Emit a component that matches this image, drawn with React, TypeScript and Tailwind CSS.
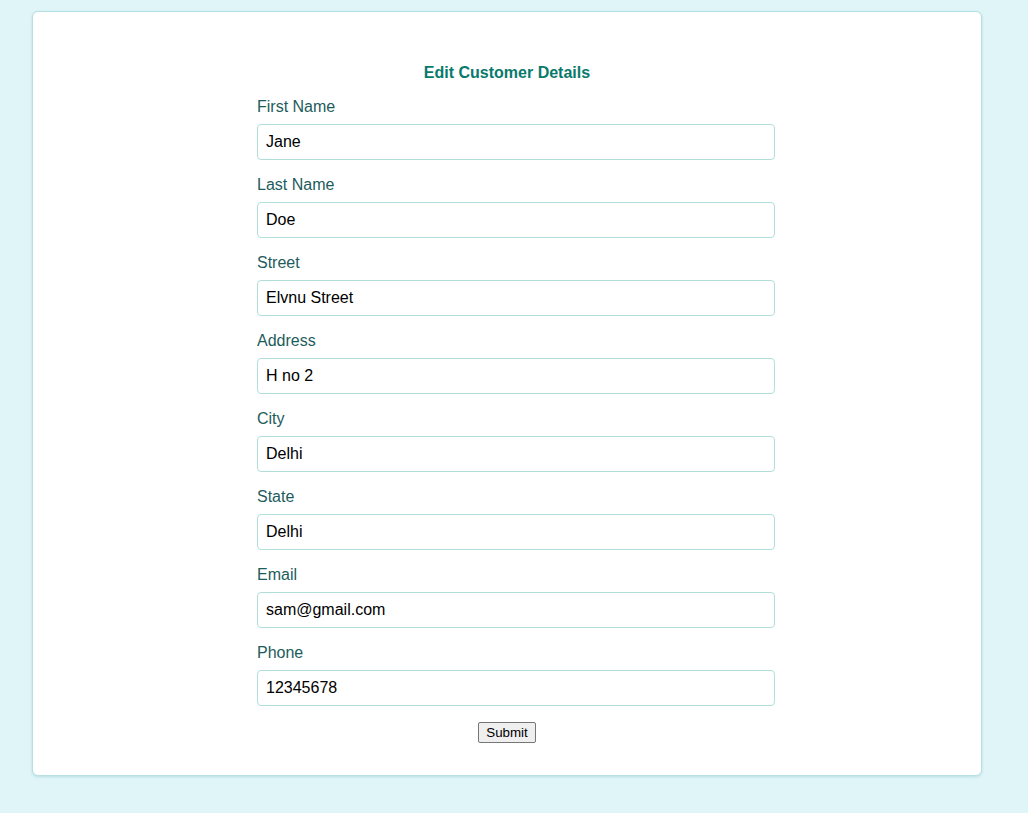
import { useState } from 'react';

const initial = [
    { key: 'firstName', label: 'First Name', value: 'Jane' },
    { key: 'lastName', label: 'Last Name', value: 'Doe' },
    { key: 'street', label: 'Street', value: 'Elvnu Street' },
    { key: 'address', label: 'Address', value: 'H no 2' },
    { key: 'city', label: 'City', value: 'Delhi' },
    { key: 'state', label: 'State', value: 'Delhi' },
    { key: 'email', label: 'Email', value: 'sam@gmail.com' },
    { key: 'phone', label: 'Phone', value: '12345678' },
];

export default function App() {
    const [fields, setFields] = useState(initial);

    const update = (key: string, value: string) => {
        setFields((prev) => prev.map((f) => (f.key === key ? { ...f, value } : f)));
    };

    return (
        <div className="min-h-[813px] bg-[#dff5f8] pt-[11px] font-['Liberation_Sans',Arial,sans-serif]">
            <div className="ml-[32px] w-[950px] rounded-[6px] border border-[#b8dfe2] bg-white pt-[52px] pb-[32px] shadow-[0_1px_3px_rgba(0,120,130,0.18)]">
                <h2 className="text-center text-[16px] font-bold leading-[18px] text-[#087a6c]">
                    Edit Customer Details
                </h2>

                {/* Form */}
                <form className="mt-[15px] ml-[224px] w-[518px]" onSubmit={(e) => e.preventDefault()}>
                    {fields.map((f) => (
                        <div key={f.key} className="mb-[15px]">
                            <label className="block pt-[1px] mb-[8px] text-[16px] leading-[18px] text-[#1d5c5c]">{f.label}</label>
                            <input
                                type="text"
                                value={f.value}
                                onChange={(e) => update(f.key, e.target.value)}
                                className="block h-[36px] w-[518px] rounded-[4px] border border-[#b2dfdb] bg-white px-[8px] text-[16px] text-black outline-none"
                            />
                        </div>
                    ))}
                    <div className="-ml-[18px] mt-[16px] flex justify-center">
                        <button
                            type="submit"
                            className="h-[21px] rounded-[2px] border border-[#767676] bg-[#efefef] px-[7px] text-[13.33px] leading-[17px] text-black"
                        >
                            Submit
                        </button>
                    </div>
                </form>
            </div>
        </div>
    );
}
